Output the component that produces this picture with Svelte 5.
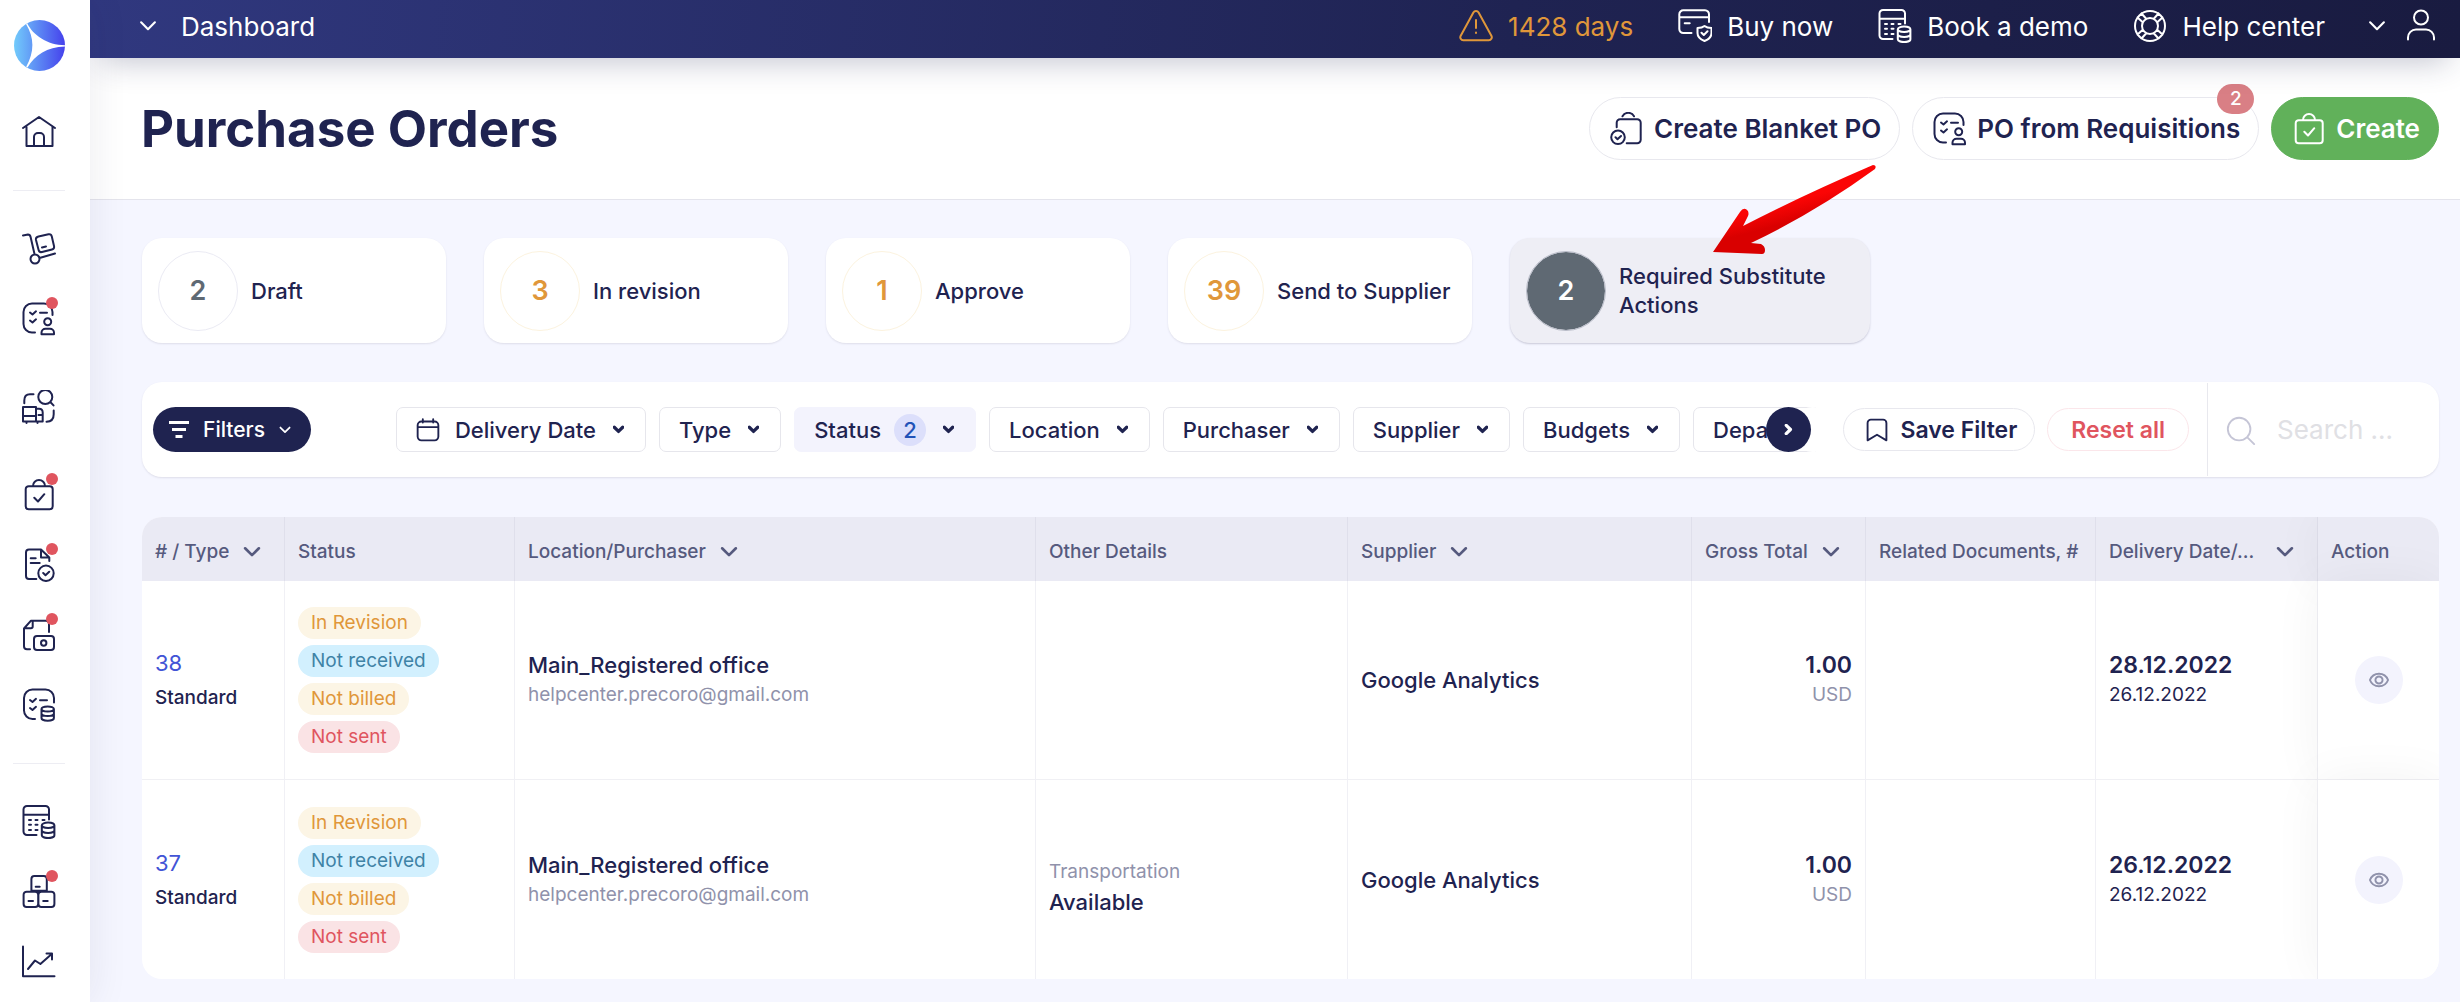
<script lang="ts">
    interface NavItem {
        icon: string;
        label: string;
        dot?: boolean;
        apart?: boolean;
    }

    interface Order {
        id: number;
        type: string;
        location: string;
        email: string;
        detailLabel?: string;
        detail?: string;
        supplier: string;
        total: string;
        currency: string;
        delivery: string;
        created: string;
    }

    // all icons are stroked on a 34x34 grid
    const icons: Record<string, string> = {
        home: 'M1 13L17 2l16 11M4.500 11.500V31h26V11.500M12 31v-9a4 4 0 0 1 4-4h2a4 4 0 0 1 4 4v9',
        trolley: 'M1 3.500L6 2.500Q8 2.500 8.600 5L12.500 22M16.500 4.500L26.500 2.300Q29.200 1.800 29.800 4.500L32 14Q32.600 16.800 30 17.500L20 20Q17.300 20.600 16.600 18L14 8Q13.400 5.200 16.500 4.500ZM20 15.500l4-1M17.500 26L33 21.500M8.500 27a4.500 4.500 0 1 0 9 0a4.500 4.500 0 1 0-9 0',
        requisition: 'M13 30.500H10A8.500 8.500 0 0 1 1.500 22V10A8.500 8.500 0 0 1 10 1.500H22A8.500 8.500 0 0 1 30.500 10v3M8 10.500l2.500 2 3.500-3.200M8 18.500l2.500 2 3.500-3.200M18 10.800h7M22.200 19.700a3.500 3.500 0 1 0 7 0a3.500 3.500 0 1 0-7 0M19.500 32.300v-1.500a4 4 0 0 1 4-4h4.500a4 4 0 0 1 4 4v1.500z',
        sourcing: 'M1 17H14V31.500M1 17V31.500H20.700V22.500Q20.700 18.700 17 18.700H14M1 26H14M16.500 25h4M4.500 32v1M15.500 32v1M16.300 7a7 7 0 1 0 14 0a7 7 0 1 0-14 0M28.500 12.200l3 3.200M2.300 13.300V10.500Q2.300 4.300 8 4.300h3.500M31.700 20.500v3.800Q31.700 31.700 24.500 31.700',
        bag: 'M6.700 8.200h21a3 3 0 0 1 3 3v17a3 3 0 0 1-3 3h-21a3 3 0 0 1-3-3v-17a3 3 0 0 1 3-3zM11 8a6 6 0 0 1 12 0M12.300 19.800L16 23.500l6.300-7.300',
        receipt: 'M14.300 31H7a3 3 0 0 1-3-3V4.500a3 3 0 0 1 3-3H19L27.300 9.500V13M19 1.500V9.500h8.300M8.700 10.300h5M8.700 15h9M16.300 25.300a7.700 7.700 0 1 0 15.400 0a7.700 7.700 0 1 0-15.400 0M21.200 25l2.300 2.200 3.700-3.500',
        invoice: 'M8 31.300H5a3 3 0 0 1-3-3V10.500L9 2.700H24q3 0 3 3V14M10.700 3.500V8.500q0 1.800-1.800 1.800H3M15 18H29a3 3 0 0 1 3 3v8a3 3 0 0 1-3 3H15a3 3 0 0 1-3-3V21a3 3 0 0 1 3-3zM19 25a2.700 2.700 0 1 0 5.400 0a2.700 2.700 0 1 0-5.400 0',
        expense: 'M13 31H10.500A8.500 8.500 0 0 1 2 22.500V10A8.500 8.500 0 0 1 10.500 1.500H23.500A8.500 8.500 0 0 1 32 10V14.500M8 12l2.500 2 3.500-3.200M8 20l2.500 2 3.500-3.200M18 12.300h7M19.500 21a6.200 2.600 0 1 0 12.400 0a6.200 2.600 0 1 0-12.400 0v9a6.200 2.800 0 0 0 12.400 0v-9M19.500 25.500a6.200 2.600 0 0 0 12.400 0',
        budget: 'M14.500 30H5A3.500 3.500 0 0 1 1.500 26.500V4.500A3.500 3.500 0 0 1 5 1H23.500A3.500 3.500 0 0 1 27 4.500V14.500M1.500 9.700H27M7 15h2M13.500 15h2M20.500 15h2M7 19.700h2M13.500 19.700h2M7 25h2M13.500 25h2M19.800 20.300a6.300 2.800 0 1 0 12.600 0a6.300 2.800 0 1 0-12.600 0v10a6.300 2.800 0 0 0 12.600 0v-10M19.800 25.300a6.300 2.800 0 0 0 12.600 0',
        stock: 'M12.400 1H21.800a3 3 0 0 1 3 3V15.700H9.400V4a3 3 0 0 1 3-3zM4.600 16.700H13.200a3 3 0 0 1 3 3V29a3 3 0 0 1-3 3H4.600a3 3 0 0 1-3-3V19.700a3 3 0 0 1 3-3zM19.400 16.700H29.400a3 3 0 0 1 3 3V29a3 3 0 0 1-3 3H19.400a3 3 0 0 1-3-3V19.700a3 3 0 0 1 3-3zM13.700 11.700h4M6.500 26h4.500M21.200 26h4.500',
        chart: 'M1 1.500V31.300H32.500M6 24l7-8.500 5.400 3.500L30 8.700M24.500 8.500H30V14.500',
        warning: 'M14.400 3.500a3 3 0 0 1 5.200 0L32.500 27a3 3 0 0 1-2.600 4.300H4.200A3 3 0 0 1 1.600 27ZM17 11v8M17 23.500v.5',
        card: 'M13.500 24H5.500A4 4 0 0 1 1.300 20V5.500A4 4 0 0 1 5.500 1.300H27A4 4 0 0 1 31 5.500V13M1.300 8.300H31M6.700 14.300h5M26.500 17c-2 1.700-4.500 2-7 2v5c0 4 3 6.500 7 8 4-1.500 7-4 7-8v-5c-2.500 0-5-.3-7-2zM23.500 23.700l2.300 2.300 3.700-3.700',
        lifebuoy: 'M2 17a15 15 0 1 0 30 0a15 15 0 1 0-30 0M9 17a8 8 0 1 0 16 0a8 8 0 1 0-16 0M9.500 13L4.500 8.500M13 9.500L8.500 4.500M21 9.500L25.500 4.500M24.500 13L29.500 8.500M24.500 21L29.500 25.500M21 24.500L25.500 29.500M13 24.500L8.500 29.500M9.500 21L4.500 25.500M4.500 8.500l4-4M25.500 4.500l4 4M29.500 25.500l-4 4M8.500 29.500l-4-4',
        user: 'M10 8.500a7 7 0 1 0 14 0a7 7 0 1 0-14 0M4 30.500v-2a8 8 0 0 1 8-8h10a8 8 0 0 1 8 8v2',
        blanket: 'M12.500 4.300a6.500 6.500 0 0 1 11.500 0M6.700 15.300V10.800a3.500 3.500 0 0 1 3.500-3.500h17a3.500 3.500 0 0 1 3.500 3.500v17a3.500 3.500 0 0 1-3.500 3.500H16.700M1.200 25.300a6.800 6.800 0 1 0 13.600 0a6.800 6.800 0 1 0-13.600 0M5.500 25.300l2 2 3.500-3.300',
        calendar: 'M10 8h14a4 4 0 0 1 4 4v12a4 4 0 0 1-4 4H10a4 4 0 0 1-4-4V12a4 4 0 0 1 4-4zM6 14h22M11.500 5.500V9M22.500 5.500V9',
        bookmark: 'M10.500 6h13a3.500 3.500 0 0 1 3.500 3.500V28L17 22 7 28V9.500A3.500 3.500 0 0 1 10.500 6z',
        search: 'M3 16a12 12 0 1 0 24 0a12 12 0 1 0-24 0M23.500 24.500L31 32',
        chevron: 'M4 10l13 13 13-13',
        next: 'M10 4l13 13-13 13',
        eye: 'M3 17C8 4 26 4 31 17C26 30 8 30 3 17ZM11.500 17a5.500 5.500 0 1 0 11 0a5.500 5.500 0 1 0-11 0'
    };

    const navGroups: NavItem[][] = [
        [{ icon: 'home', label: 'Home' }],
        [
            { icon: 'trolley', label: 'Warehouse' },
            { icon: 'requisition', label: 'Requisitions', dot: true },
            { icon: 'sourcing', label: 'Sourcing', apart: true },
            { icon: 'bag', label: 'Purchase Orders', dot: true },
            { icon: 'receipt', label: 'Receipts', dot: true },
            { icon: 'invoice', label: 'Invoices', dot: true },
            { icon: 'expense', label: 'Expenses' }
        ],
        [
            { icon: 'budget', label: 'Budgets' },
            { icon: 'stock', label: 'Inventory', dot: true },
            { icon: 'chart', label: 'Reports' }
        ]
    ];

    const topLinks = [
        { icon: 'warning', label: '1428 days', warn: true },
        { icon: 'card', label: 'Buy now' },
        { icon: 'budget', label: 'Book a demo' },
        { icon: 'lifebuoy', label: 'Help center' }
    ];

    const stages = [
        { count: 2, label: 'Draft', tone: 'grey' },
        { count: 3, label: 'In revision', tone: 'amber' },
        { count: 1, label: 'Approve', tone: 'amber' },
        { count: 39, label: 'Send to Supplier', tone: 'amber' },
        { count: 2, label: 'Required Substitute Actions', tone: 'active' }
    ];

    const filters = [
        { label: 'Delivery Date', icon: 'calendar' },
        { label: 'Type' },
        { label: 'Status', count: 2 },
        { label: 'Location' },
        { label: 'Purchaser' },
        { label: 'Supplier' },
        { label: 'Budgets' },
        { label: 'Department' }
    ];

    const columns = [
        { label: '# / Type', key: 'id', sort: true },
        { label: 'Status', key: 'status' },
        { label: 'Location/Purchaser', key: 'location', sort: true },
        { label: 'Other Details', key: 'details' },
        { label: 'Supplier', key: 'supplier', sort: true },
        { label: 'Gross Total', key: 'total', sort: true },
        { label: 'Related Documents, #', key: 'docs' },
        { label: 'Delivery Date/...', key: 'date', sort: true },
        { label: 'Action', key: 'action' }
    ];

    const statuses = [
        { label: 'In Revision', tone: 'amber' },
        { label: 'Not received', tone: 'blue' },
        { label: 'Not billed', tone: 'amber' },
        { label: 'Not sent', tone: 'red' }
    ];

    const orders: Order[] = [
        {
            id: 38,
            type: 'Standard',
            location: 'Main_Registered office',
            email: 'helpcenter.precoro@gmail.com',
            supplier: 'Google Analytics',
            total: '1.00',
            currency: 'USD',
            delivery: '28.12.2022',
            created: '26.12.2022'
        },
        {
            id: 37,
            type: 'Standard',
            location: 'Main_Registered office',
            email: 'helpcenter.precoro@gmail.com',
            detailLabel: 'Transportation',
            detail: 'Available',
            supplier: 'Google Analytics',
            total: '1.00',
            currency: 'USD',
            delivery: '26.12.2022',
            created: '26.12.2022'
        }
    ];

    let search = $state('');
</script>

{#snippet icon(name: string, kind = '')}
    <svg class="icon {kind}" viewBox="0 0 34 34" aria-hidden="true">
        <path d={icons[name]} />
    </svg>
{/snippet}

<div class="app">
    <aside class="sidebar">
        <a class="logo" href="/" aria-label="Precoro">
            <svg viewBox="0 0 51 51" width="51" height="51">
                <defs>
                    <linearGradient id="logo-fill">
                        <stop offset="0" stop-color="#72cbfb" />
                        <stop offset="1" stop-color="#4541ec" />
                    </linearGradient>
                </defs>
                <circle cx="25.500" cy="25.500" r="25.500" fill="url(#logo-fill)" />
                <path fill="#fff" d="M12 4l1.200-.8C19 15 33 25 51 25.200v1.300C33 27 21 35 13.500 47.500l-1.300-.7C20.500 32 20.500 18 12 4z" />
            </svg>
        </a>
        <nav>
            {#each navGroups as group}
                <ul class="nav-group">
                    {#each group as item}
                        <li class:apart={item.apart}>
                            <a href="/" aria-label={item.label}>
                                {@render icon(item.icon)}
                                {#if item.dot}<span class="dot"></span>{/if}
                            </a>
                        </li>
                    {/each}
                </ul>
            {/each}
        </nav>
    </aside>

    <div class="main">
        <div class="topbar">
            <button class="crumb">
                {@render icon('chevron', 'caret')}
                Dashboard
            </button>
            <div class="top-links">
                {#each topLinks as link}
                    <a class="top-link" class:warn={link.warn} href="/">
                        {@render icon(link.icon)}
                        {link.label}
                    </a>
                {/each}
                <button class="account" aria-label="Account">
                    {@render icon('chevron', 'caret')}
                    {@render icon('user')}
                </button>
            </div>
        </div>

        <header class="page-header">
            <h1>Purchase Orders</h1>
            <div class="header-actions">
                <button class="pill">{@render icon('blanket')} Create Blanket PO</button>
                <button class="pill">
                    {@render icon('requisition')} PO from Requisitions
                    <span class="pill-badge">2</span>
                </button>
                <button class="pill create">{@render icon('bag')} Create</button>
            </div>
        </header>

        <div class="content">
            <div class="stages">
                {#each stages as stage}
                    <button class="stage {stage.tone}">
                        <span class="stage-count">{stage.count}</span>
                        <span class="stage-label">{stage.label}</span>
                        {#if stage.tone === 'active'}
                            <svg class="pointer" viewBox="0 0 170 95" aria-hidden="true">
                                <defs>
                                    <linearGradient id="pointer-fill" x1="0.4" y1="0.3" x2="0.55" y2="0.6">
                                        <stop offset="0.4" stop-color="#fb0505" />
                                        <stop offset="1" stop-color="#d90000" />
                                    </linearGradient>
                                </defs>
                                <path fill="url(#pointer-fill)" d="M2 88L29 48q4-6 8-1 1 3 0 5l-5 10Q90 32 162 1q4 0 2 4Q105 48 40 79l10 1q4 2 4 6 0 4-3 4z" />
                            </svg>
                        {/if}
                    </button>
                {/each}
            </div>

            <div class="filter-bar">
                <button class="filters-toggle">
                    <svg class="bars" viewBox="0 0 20 17" aria-hidden="true">
                        <path d="M0 1.500h20M3 8.500h14M6.500 15.500h7" />
                    </svg>
                    Filters
                    {@render icon('chevron', 'small-caret')}
                </button>
                <div class="chips">
                    {#each filters as filter}
                        <button class="chip" class:selected={filter.count}>
                            {#if filter.icon}{@render icon(filter.icon, 'chip-icon')}{/if}
                            {filter.label}
                            {#if filter.count}<span class="chip-count">{filter.count}</span>{/if}
                            {@render icon('chevron', 'bold-caret')}
                        </button>
                    {/each}
                    <button class="chips-next" aria-label="More filters">
                        {@render icon('next', 'bold-caret')}
                    </button>
                </div>
                <div class="filter-actions">
                    <button class="outline">{@render icon('bookmark', 'chip-icon')} Save Filter</button>
                    <button class="outline reset">Reset all</button>
                </div>
                <label class="search">
                    {@render icon('search', 'chip-icon')}
                    <input type="text" placeholder="Search ..." aria-label="Search" bind:value={search} />
                </label>
            </div>

            <div class="table-wrap">
                <table>
                    <thead>
                        <tr>
                            {#each columns as column}
                                <th class={column.key}>
                                    <span class="th-inner">
                                        {column.label}
                                        {#if column.sort}{@render icon('chevron', 'sort-caret')}{/if}
                                    </span>
                                </th>
                            {/each}
                        </tr>
                    </thead>
                    <tbody>
                        {#each orders as order}
                            <tr>
                                <td>
                                    <a class="order-id" href="/">{order.id}</a>
                                    <div class="order-type">{order.type}</div>
                                </td>
                                <td>
                                    <div class="tags">
                                        {#each statuses as status}
                                            <span class="tag {status.tone}">{status.label}</span>
                                        {/each}
                                    </div>
                                </td>
                                <td>
                                    <div class="primary">{order.location}</div>
                                    <div class="muted">{order.email}</div>
                                </td>
                                <td class="details">
                                    {#if order.detail}
                                        <div class="muted">{order.detailLabel}</div>
                                        <div class="primary">{order.detail}</div>
                                    {/if}
                                </td>
                                <td><div class="primary">{order.supplier}</div></td>
                                <td class="total">
                                    <div class="primary strong">{order.total}</div>
                                    <div class="muted">{order.currency}</div>
                                </td>
                                <td></td>
                                <td>
                                    <div class="primary strong">{order.delivery}</div>
                                    <div class="secondary">{order.created}</div>
                                </td>
                                <td class="action">
                                    <button class="view" aria-label="View order {order.id}">
                                        {@render icon('eye', 'eye')}
                                    </button>
                                </td>
                            </tr>
                        {/each}
                    </tbody>
                </table>
            </div>
        </div>
    </div>
</div>

<style>
    :global(body) {
        margin: 0;
        background: #f5f6ff;
    }

    .app {
        display: flex;
        min-height: 100vh;
        font-family: Inter, "Liberation Sans", sans-serif;
        font-size: 22px;
        font-weight: 500;
        color: #1f2350;
    }

    button,
    input {
        font: inherit;
        color: inherit;
        border: none;
        background: none;
        padding: 0;
        margin: 0;
    }

    button {
        cursor: pointer;
        white-space: nowrap;
    }

    a {
        color: inherit;
        text-decoration: none;
    }

    .icon {
        flex: none;
        width: 34px;
        height: 34px;
        fill: none;
        stroke: currentColor;
        stroke-width: 2;
        stroke-linecap: round;
        stroke-linejoin: round;
    }

    .icon.caret {
        width: 18px;
        height: 18px;
        stroke-width: 4;
    }

    .icon.small-caret {
        width: 12px;
        height: 12px;
        stroke-width: 5;
    }

    .icon.bold-caret {
        width: 11px;
        height: 11px;
        stroke-width: 10;
    }

    .icon.sort-caret {
        width: 18px;
        height: 18px;
        stroke-width: 5;
    }

    .icon.chip-icon {
        width: 32px;
        height: 32px;
    }

    .icon.eye {
        width: 22px;
        height: 22px;
        stroke-width: 3;
    }

    /* sidebar */
    .sidebar {
        position: relative;
        z-index: 2;
        flex: none;
        box-sizing: border-box;
        width: 90px;
        padding: 20px 12px 0 0;
        background: #fff;
        box-shadow: 0 0 40px rgb(31 35 80 / 0.09);
    }

    .logo {
        display: flex;
        justify-content: center;
        margin-bottom: 26px;
    }

    .nav-group {
        list-style: none;
        margin: 0;
        padding: 0;
    }

    .nav-group + .nav-group::before {
        content: '';
        display: block;
        height: 1px;
        margin: 23px 13px;
        background: #ededf3;
    }

    .nav-group li {
        display: flex;
        align-items: center;
        justify-content: center;
        height: 70px;
    }

    .nav-group li.apart {
        margin: 18px 0;
    }

    .nav-group a {
        position: relative;
        display: flex;
    }

    .dot {
        position: absolute;
        top: -5px;
        right: -2px;
        width: 12px;
        height: 12px;
        border-radius: 50%;
        background: #e0555f;
    }

    /* top bar */
    .main {
        flex: 1;
        min-width: 0;
    }

    .topbar {
        position: relative;
        z-index: 1;
        display: flex;
        align-items: center;
        justify-content: space-between;
        box-sizing: border-box;
        height: 58px;
        padding: 0 22px 6px 49px;
        background: linear-gradient(95deg, #30387f, #1f2352 60%, #191b40);
        box-shadow: 0 14px 32px -12px rgb(31 35 80 / 0.3);
        color: #fff;
        font-size: 26px;
        font-weight: 400;
    }

    .crumb,
    .account,
    .top-links,
    .top-link {
        display: flex;
        align-items: center;
    }

    .crumb {
        gap: 24px;
    }

    .top-links {
        gap: 45px;
    }

    .top-link {
        gap: 15px;
    }

    .top-link.warn {
        color: #e0973a;
    }

    .account {
        gap: 18px;
        margin-left: -2px;
    }

    /* page header */
    .page-header {
        display: flex;
        align-items: center;
        justify-content: space-between;
        height: 141px;
        padding: 0 21px 0 51px;
        background: #fff;
        border-bottom: 1px solid #e4e4ec;
    }

    h1 {
        margin: 0;
        font-size: 51px;
        font-weight: 700;
        line-height: 64px;
    }

    .header-actions {
        display: flex;
        gap: 12px;
    }

    .pill {
        position: relative;
        display: flex;
        align-items: center;
        gap: 10px;
        height: 63px;
        padding: 0 18px 0 20px;
        border: 1px solid #e8e8ee;
        border-radius: 32px;
        font-size: 26px;
        font-weight: 600;
        box-sizing: border-box;
    }

    .pill.create {
        background: #61b15a;
        border-color: #61b15a;
        color: #fff;
    }

    .pill-badge {
        position: absolute;
        top: -14px;
        right: 4px;
        width: 37px;
        border-radius: 15px;
        background: #d97f85;
        color: #fff;
        font-size: 19px;
        font-weight: 500;
        line-height: 30px;
        text-align: center;
    }

    .content {
        padding: 38px 21px 24px 52px;
    }

    /* stage cards */
    .stages {
        display: flex;
        gap: 38px;
        margin-bottom: 39px;
    }

    .stage {
        position: relative;
        display: flex;
        align-items: center;
        gap: 13px;
        box-sizing: border-box;
        width: 304px;
        height: 105px;
        padding: 0 16px;
        border-radius: 20px;
        background: #fff;
        box-shadow: 0 1px 2px #dedeea;
        text-align: left;
    }

    .stage-count {
        flex: none;
        box-sizing: border-box;
        width: 80px;
        border: 1px solid #ebebf4;
        border-radius: 50%;
        color: #5f6973;
        font-size: 27px;
        font-weight: 600;
        line-height: 78px;
        text-align: center;
    }

    .stage.amber .stage-count {
        border-color: #fcf3df;
        color: #e0973a;
    }

    .stage.active {
        width: 360px;
        background: #eeeef5;
        box-shadow: 0 1px 2px #c8c8d8;
    }

    .stage.active .stage-label {
        white-space: normal;
        line-height: 29px;
    }

    .stage.active .stage-count {
        border-color: #b9bcc8;
        background: #5f6973;
        background-clip: content-box;
        color: #fff;
    }

    .pointer {
        position: absolute;
        top: -74px;
        left: 201px;
        width: 170px;
        height: 95px;
        pointer-events: none;
    }

    /* filter bar */
    .filter-bar {
        display: flex;
        align-items: center;
        height: 95px;
        margin-bottom: 40px;
        padding-left: 11px;
        border-radius: 20px;
        background: #fff;
        box-shadow: 0 1px 2px #dedeea;
    }

    .filters-toggle {
        display: flex;
        align-items: center;
        gap: 14px;
        height: 45px;
        margin-right: 85px;
        padding: 0 20px 0 16px;
        border-radius: 23px;
        background: #1f2350;
        color: #fff;
        font-size: 21px;
    }

    .bars {
        width: 20px;
        height: 17px;
        stroke: currentColor;
        stroke-width: 3;
    }

    .chips {
        position: relative;
        display: flex;
        flex: 1;
        gap: 13px;
        min-width: 0;
        overflow: hidden;
    }

    .chip {
        display: flex;
        flex: none;
        align-items: center;
        gap: 17px;
        box-sizing: border-box;
        height: 45px;
        padding: 0 21px 0 19px;
        border: 1px solid #e6e6ec;
        border-radius: 7px;
    }

    .chip .chip-icon {
        margin: 0 -6px 0 -4px;
    }

    .chip.selected {
        border-color: #f3f3fd;
        background: #f3f3fd;
    }

    .chip-count {
        width: 32px;
        margin-left: -4px;
        border-radius: 50%;
        background: #dcdffb;
        color: #2152b8;
        line-height: 32px;
        text-align: center;
    }

    .chips-next {
        position: absolute;
        top: 0;
        right: 5px;
        display: flex;
        align-items: center;
        justify-content: center;
        width: 45px;
        height: 45px;
        border-radius: 50%;
        background: #1f2350;
        box-shadow: 24px 0 0 #fff;
        color: #fff;
    }

    .filter-actions {
        display: flex;
        gap: 12px;
        padding: 0 18px 0 27px;
    }

    .outline {
        display: flex;
        align-items: center;
        gap: 8px;
        box-sizing: border-box;
        height: 43px;
        padding: 0 17px;
        border: 1px solid #e8e8ee;
        border-radius: 22px;
        font-size: 23px;
        font-weight: 600;
    }

    .outline.reset {
        padding: 0 23px;
        border-color: #fbe6ea;
        color: #e0555f;
    }

    .search {
        display: flex;
        align-items: center;
        gap: 20px;
        box-sizing: border-box;
        width: 232px;
        height: 93px;
        padding: 0 17px;
        border-left: 1px solid #e8e8ee;
        font-size: 26px;
        font-weight: 400;
    }

    .search .icon {
        color: #c5c5d6;
    }

    .search input {
        width: 100%;
        min-width: 0;
        outline: none;
    }

    .search input::placeholder {
        color: #e0e0e4;
        opacity: 1;
    }

    /* table */
    .table-wrap {
        overflow: hidden;
        border-radius: 20px;
        background: #fff;
    }

    table {
        width: 100%;
        border-collapse: separate;
        border-spacing: 0;
        table-layout: fixed;
    }

    th {
        height: 64px;
        padding: 5px 13px 0;
        background: #eaeaf4;
        border-right: 1px solid #dfdfeb;
        box-sizing: border-box;
        color: #565a7e;
        font-size: 19px;
        font-weight: 500;
        text-align: left;
        white-space: nowrap;
    }

    .th-inner {
        display: flex;
        align-items: center;
        gap: 14px;
    }

    th.id {
        width: 143px;
    }

    th.status {
        width: 230px;
    }

    th.details {
        width: 312px;
    }

    th.supplier {
        width: 344px;
    }

    th.total {
        width: 174px;
    }

    th.docs {
        width: 230px;
    }

    th.date {
        width: 222px;
    }

    th.date .th-inner {
        justify-content: space-between;
        padding-right: 10px;
    }

    th.action {
        width: 121px;
    }

    td {
        box-sizing: border-box;
        height: 199px;
        padding: 0 13px;
        border-right: 1px solid #f0f0f5;
        border-bottom: 1px solid #f0f0f4;
        vertical-align: middle;
    }

    tbody tr:last-child td {
        border-bottom: none;
    }

    th:last-child,
    td:last-child {
        border-right: none;
    }

    td.action {
        background: #fff;
        text-align: center;
    }

    th.action,
    td.action {
        box-shadow: 0 0 50px rgb(0 0 0 / 0.05);
    }

    td.details {
        padding-top: 14px;
    }

    .order-id {
        display: block;
        color: #4254d6;
        font-weight: 400;
        line-height: 36px;
    }

    .order-type {
        font-size: 19px;
        line-height: 34px;
    }

    .tags {
        display: flex;
        flex-direction: column;
        align-items: flex-start;
        gap: 6px;
    }

    .tag {
        padding: 0 13px;
        border-radius: 16px;
        font-size: 19px;
        font-weight: 400;
        line-height: 32px;
    }

    .tag.amber {
        background: #fcf5e5;
        color: #e0973a;
    }

    .tag.blue {
        background: #d2f0fe;
        color: #3f83a6;
    }

    .tag.red {
        background: #fae3e5;
        color: #e0555f;
    }

    .primary {
        line-height: 30px;
    }

    .strong {
        font-size: 23px;
        font-weight: 600;
    }

    .muted {
        color: #9092ab;
        font-size: 19px;
        font-weight: 400;
        line-height: 30px;
    }

    .secondary {
        font-size: 19px;
        font-weight: 400;
        line-height: 30px;
    }

    td.total {
        text-align: right;
    }

    .view {
        display: inline-flex;
        align-items: center;
        justify-content: center;
        width: 48px;
        height: 48px;
        border-radius: 50%;
        background: #f3f3fd;
        color: #9092ab;
    }
</style>
